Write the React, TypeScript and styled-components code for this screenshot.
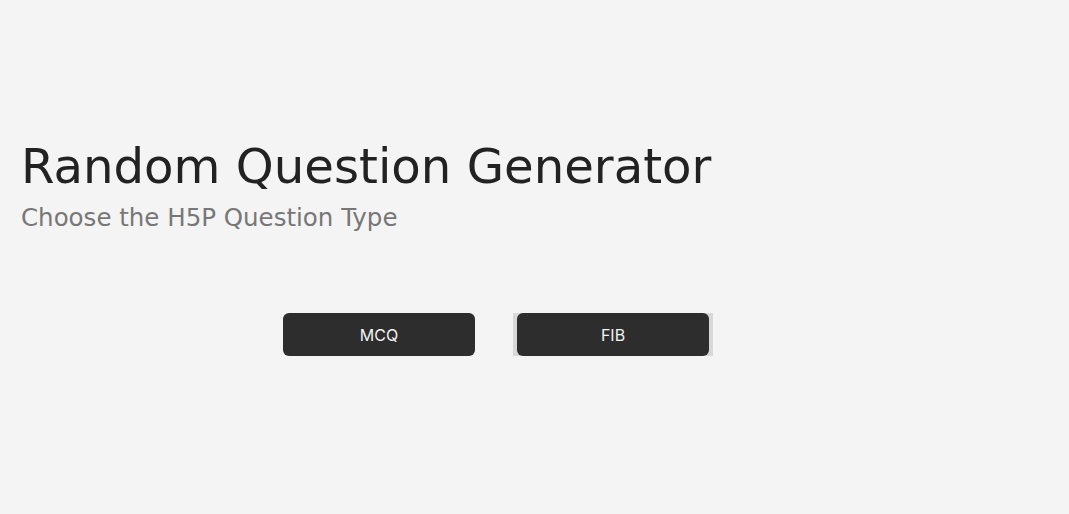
import React from 'react';
import styled, { createGlobalStyle } from 'styled-components';

const GlobalStyle = createGlobalStyle`
    html, body {
        margin: 0;
        padding: 0;
        background-color: #f4f4f4;
    }
    body {
        font-family: "DejaVu Sans", sans-serif;
    }
`;

const Page = styled.div`
    min-height: 514px;
    padding: 140px 0 0 21px;
    box-sizing: border-box;
`;

const Header = styled.div`
    display: inline-flex;
    flex-direction: column;
`;

const Title = styled.h1`
    margin: 0;
    font-family: "DejaVu Sans", sans-serif;
    font-size: 48.2px;
    font-weight: 400;
    line-height: 52px;
    color: #222222;
`;

const Subtitle = styled.h2`
    margin: 11px 0 0;
    font-family: "DejaVu Sans", sans-serif;
    font-size: 24.5px;
    font-weight: 400;
    line-height: 30px;
    color: #777777;
`;

const ButtonRow = styled.div`
    display: flex;
    gap: 38px;
    margin: 80px 0 0 262px;
`;

interface SlotProps {
    $active?: boolean;
};

const ButtonSlot = styled.div<SlotProps>`
    display: flex;
    padding: ${({ $active }) => ($active ? '0 4px' : '0')};
    background-color: ${({ $active }) => ($active ? '#d8d8d8' : 'transparent')};
`;

const TypeButton = styled.button`
    width: 192px;
    height: 43px;
    border: none;
    border-radius: 6px;
    background-color: #2d2d2d;
    color: #f2f2f2;
    font-family: Inter, "Liberation Sans", sans-serif;
    font-size: 16px;
    cursor: pointer;
`;

const App: React.FC = () => {
    return (
        <>
            <GlobalStyle />
            <Page>
                <Header>
                    <Title>Random Question Generator</Title>
                    <Subtitle>Choose the H5P Question Type</Subtitle>
                </Header>
                <ButtonRow>
                    <ButtonSlot>
                        <TypeButton>MCQ</TypeButton>
                    </ButtonSlot>
                    <ButtonSlot $active>
                        <TypeButton>FIB</TypeButton>
                    </ButtonSlot>
                </ButtonRow>
            </Page>
        </>
    );
};

export default App;
